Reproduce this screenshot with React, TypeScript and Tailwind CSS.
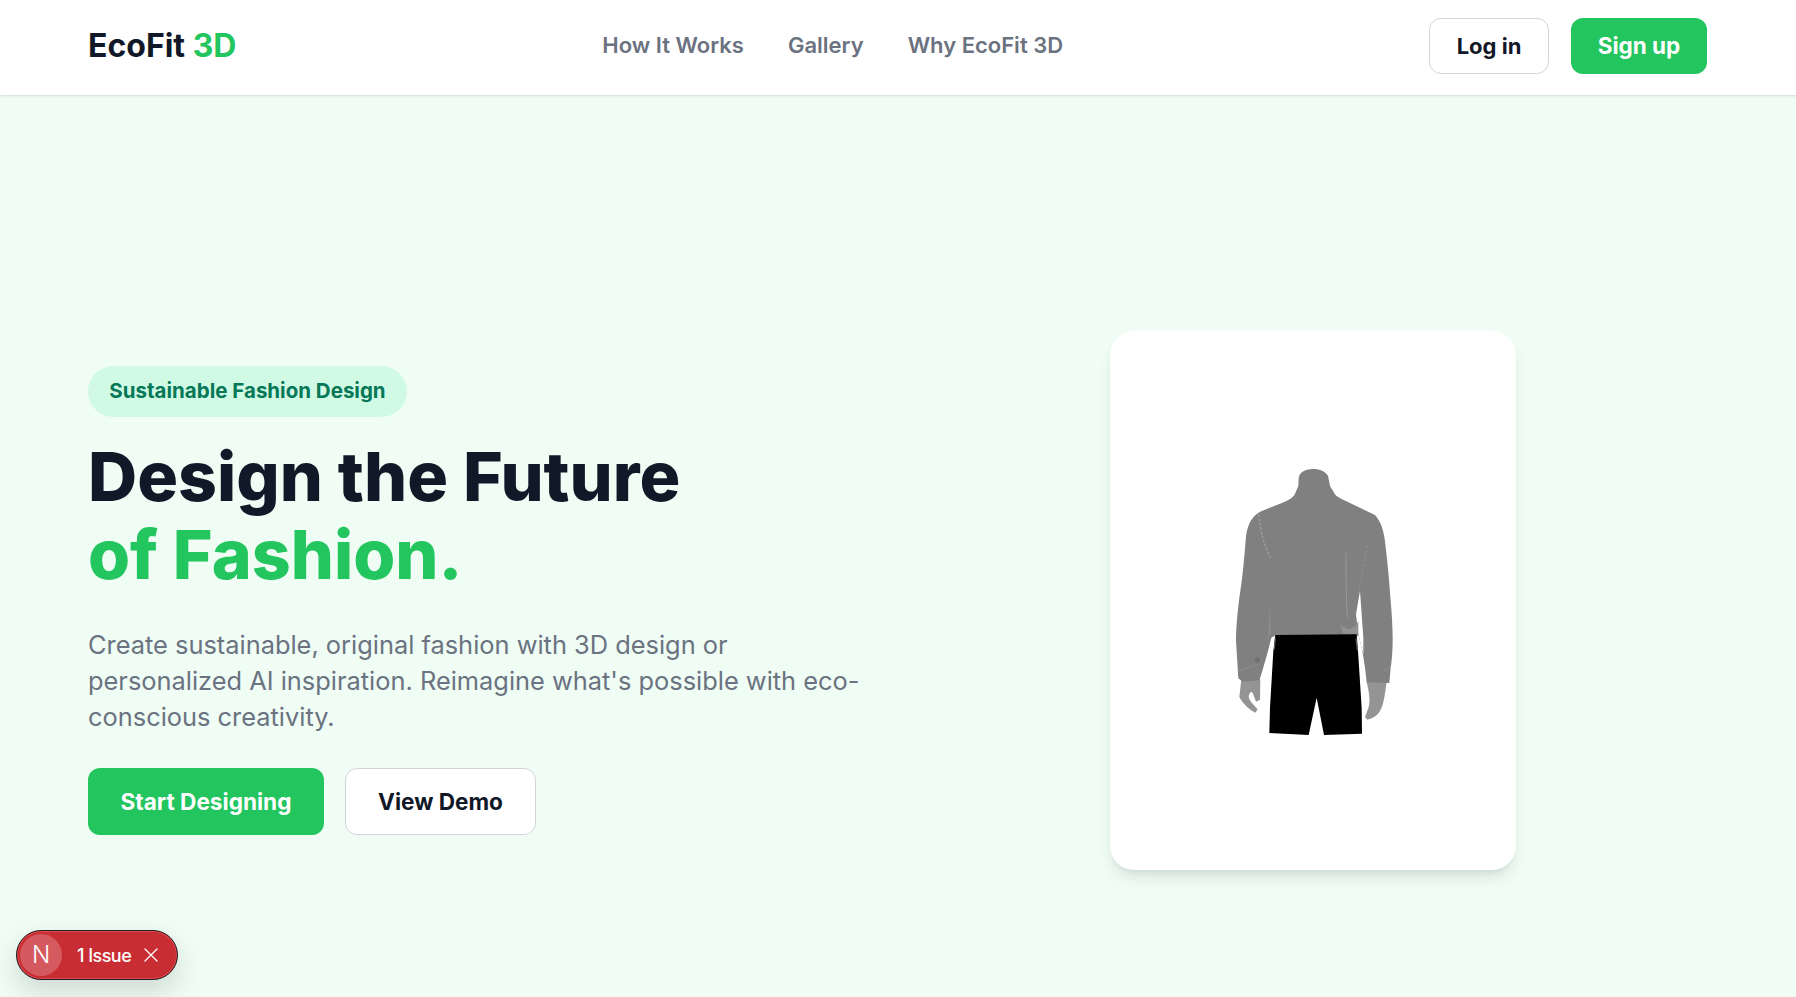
import { X } from "lucide-react";

const font = { fontFamily: "Inter, 'Noto Sans', sans-serif" };

function Figure() {
  return (
    <svg viewBox="0 0 840 960" className="ml-[14px] h-[320px] w-[280px]">
      <defs>
        <filter id="soft" x="-5%" y="-5%" width="110%" height="110%">
          <feGaussianBlur stdDeviation="1.8" />
        </filter>
      </defs>
      <g filter="url(#soft)">
        {/* hands */}
        <path d="M184 715 L178 768 C190 790 210 808 226 815 L233 805 C220 790 206 778 206 765 C210 752 214 750 218 756 L228 782 L240 776 L241 715 Z" fill="#949494" />
        <path d="M560 722 C566 750 572 775 566 798 L555 828 L562 836 C580 832 596 822 604 802 C612 785 616 750 620 722 Z" fill="#949494" />
        {/* shirt */}
        <path d="M400 84 C372 84 358 96 356 112 L355 135 L345 158 C338 172 325 178 300 188 L240 212 C218 226 204 244 198 285 C194 340 188 410 178 470 C172 520 168 560 168 600 L175 712 L188 722 L238 718 C250 680 262 640 274 590 L285 584 L535 584 C545 610 555 670 560 724 L628 726 L632 680 C640 630 640 570 632 480 C628 420 622 360 616 310 C612 270 604 244 585 222 L510 186 C490 176 475 172 465 160 L450 135 L444 104 C436 92 420 84 400 84 Z" fill="#808080" />
        <path d="M540 450 L528 520 L535 580 L550 640 L550 590 Z" fill="#ffffff" />
        <path d="M275 440 L270 510 L272 570 L264 600 L268 520 Z" fill="#8e8e8e" />
        <path d="M236 220 C240 260 250 310 272 350" fill="none" stroke="#a8a8a8" strokeWidth="3" strokeDasharray="8 5" />
        <path d="M565 300 C555 350 545 400 538 445" fill="none" stroke="#989898" strokeWidth="2" strokeDasharray="8 6" />
        <path d="M498 335 C498 400 498 470 502 530" fill="none" stroke="#999999" strokeWidth="3" />
        <path d="M480 550 C500 570 520 570 535 540 L535 578 L490 578 Z" fill="#929292" />
        <circle cx="232" cy="658" r="8" fill="#707070" />
        <path d="M175 690 L238 668 M610 690 L630 680" stroke="#8f8f8f" strokeWidth="3" fill="none" />
        {/* shorts */}
        <path d="M286 582 L530 580 L534 630 L545 800 L546 878 L432 882 L410 770 L386 882 L268 876 L270 800 L280 630 Z" fill="#000000" />
        <path d="M286 592 L283 625 M528 592 L532 628" stroke="#666666" strokeWidth="3" fill="none" />
      </g>
    </svg>
  );
}

export default function App() {
  return (
    <div className="relative h-[997px] overflow-hidden bg-[#effdf5]" style={font}>
      <header className="relative z-10 flex h-[95px] items-center justify-between bg-white pb-[3px] pl-[88px] pr-[89px] shadow-sm">
        <div className="text-[32px] font-bold leading-none text-[#111827]">
          EcoFit <span className="text-[#22c55e]">3D</span>
        </div>
        <nav className="mb-[2px] flex items-center gap-[44px] text-[22px] font-semibold text-[#6b7280]">
          <a>How It Works</a>
          <a>Gallery</a>
          <a>Why EcoFit 3D</a>
        </nav>
        <div className="flex items-center gap-[22px]">
          <button className="h-[56px] w-[120px] rounded-xl border border-[#d1d5db] bg-white text-[22px] font-bold text-[#111827]">
            Log in
          </button>
          <button className="h-[56px] w-[136px] rounded-xl bg-[#22c55e] text-[22.5px] font-bold text-white">
            Sign up
          </button>
        </div>
      </header>

      <main className="grid grid-cols-[782px_1fr] items-center gap-[48px] px-[88px] pt-[236px]">
        <div>
          <span className="inline-flex h-[51px] w-[319px] items-center justify-center rounded-full bg-[#d1fae5] text-[20.5px] font-bold text-[#047857]">
            Sustainable Fashion Design
          </span>
          <h1 className="mt-[20px] text-[68px] font-extrabold leading-[78px] text-[#111827]">
            Design the Future
            <br />
            <span className="text-[#22c55e]">of Fashion.</span>
          </h1>
          <p className="mt-[34px] text-[25.4px] leading-[36px] text-[#6b7280]">
            Create sustainable, original fashion with 3D design or personalized AI inspiration. Reimagine what's possible with eco-conscious creativity.
          </p>
          <div className="mt-[33px] flex gap-[21px]">
            <button className="h-[67px] w-[236px] rounded-xl bg-[#22c55e] text-[22.6px] font-bold text-white">
              Start Designing
            </button>
            <button className="h-[67px] w-[191px] rounded-xl border border-[#d1d5db] bg-white text-[22.6px] font-bold text-[#111827]">
              View Demo
            </button>
          </div>
        </div>

        <div className="flex justify-center">
          <div className="flex h-[539px] w-[406px] items-center justify-center rounded-3xl bg-white shadow-lg">
            <Figure />
          </div>
        </div>
      </main>

      {/* dev tools badge */}
      <div className="absolute bottom-[17px] left-[16px] flex h-[50px] w-[162px] items-center rounded-full border-[1.5px] border-[#1f1f1f] bg-[#c92d34] pl-[3px] shadow-[inset_0_0_0_1px_#dc4a50,0_12px_28px_rgba(0,0,0,0.14)]">
        <div className="flex h-[42px] w-[42px] items-center justify-center rounded-full bg-[#d55a60] text-[24px] font-light text-white">
          N
        </div>
        <span className="ml-[15px] text-[18px] font-medium tracking-[-0.03em] text-white">1 Issue</span>
        <X className="ml-[8px] h-[24px] w-[24px] text-white" strokeWidth={1.25} />
      </div>
    </div>
  );
}
